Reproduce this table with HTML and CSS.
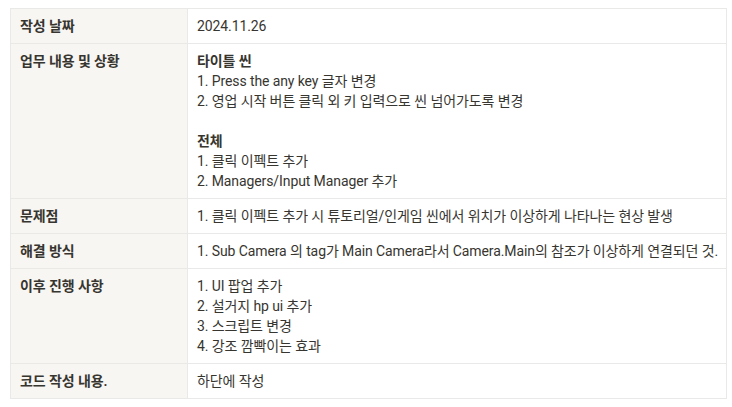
FILE: index.html
```html
<!DOCTYPE html>
<html lang="ko">
    <head>
        <meta charset="UTF-8">
        <meta name="viewport" content="width=device-width, initial-scale=1.0">
        <title>작업 기록</title>
        <link rel="stylesheet" href="styles.css">
    </head>
    <body>
        <table class="log-table">
            <tr>
                <th>작성 날짜</th>
                <td>2024.11.26</td>
            </tr>
            <tr>
                <th>업무 내용 및 상황</th>
                <td>
                    <div class="section-title">타이틀 씬</div>
                    <div>1. Press the any key 글자 변경</div>
                    <div>2. 영업 시작 버튼 클릭 외 키 입력으로 씬 넘어가도록 변경</div>
                    <div class="blank"></div>
                    <div class="section-title">전체</div>
                    <div>1. 클릭 이펙트 추가</div>
                    <div>2. Managers/Input Manager 추가</div>
                </td>
            </tr>
            <tr>
                <th>문제점</th>
                <td>1. 클릭 이펙트 추가 시 튜토리얼/인게임 씬에서 위치가 이상하게 나타나는 현상 발생</td>
            </tr>
            <tr>
                <th>해결 방식</th>
                <td class="one-line">1. Sub Camera 의 tag가 Main Camera라서 Camera.Main의 참조가 이상하게 연결되던 것.</td>
            </tr>
            <tr>
                <th>이후 진행 사항</th>
                <td>
                    <div>1. UI 팝업 추가</div>
                    <div>2. 설거지 hp ui 추가</div>
                    <div>3. 스크립트 변경</div>
                    <div>4. 강조 깜빡이는 효과</div>
                </td>
            </tr>
            <tr>
                <th>코드 작성 내용.</th>
                <td>하단에 작성</td>
            </tr>
        </table>
    </body>
</html>
```

FILE: styles.css
```css
*{
    margin: 0;
    padding: 0;
    box-sizing: border-box;
}

body{
    padding: 8px 5px 8px 10px;
    background-color: #ffffff;
    color: #37352f;
    font-family: Roboto, "Noto Sans CJK KR", sans-serif;
    font-size: 14px;
    line-height: 20px;
}

.log-table{
    width: 717px;
    border-collapse: collapse;
    table-layout: fixed;
}

.log-table th,
.log-table td{
    border: 1px solid #e9e9e7;
    padding: 7px 8px 7px 9px;
    text-align: left;
    vertical-align: top;
    letter-spacing: -0.1px;
}

.log-table th{
    width: 177px;
    background-color: #f7f6f3;
    font-weight: 600;
}

.log-table .one-line{
    white-space: nowrap;
}

.section-title{
    font-weight: 600;
}

.blank{
    height: 20px;
}
```
